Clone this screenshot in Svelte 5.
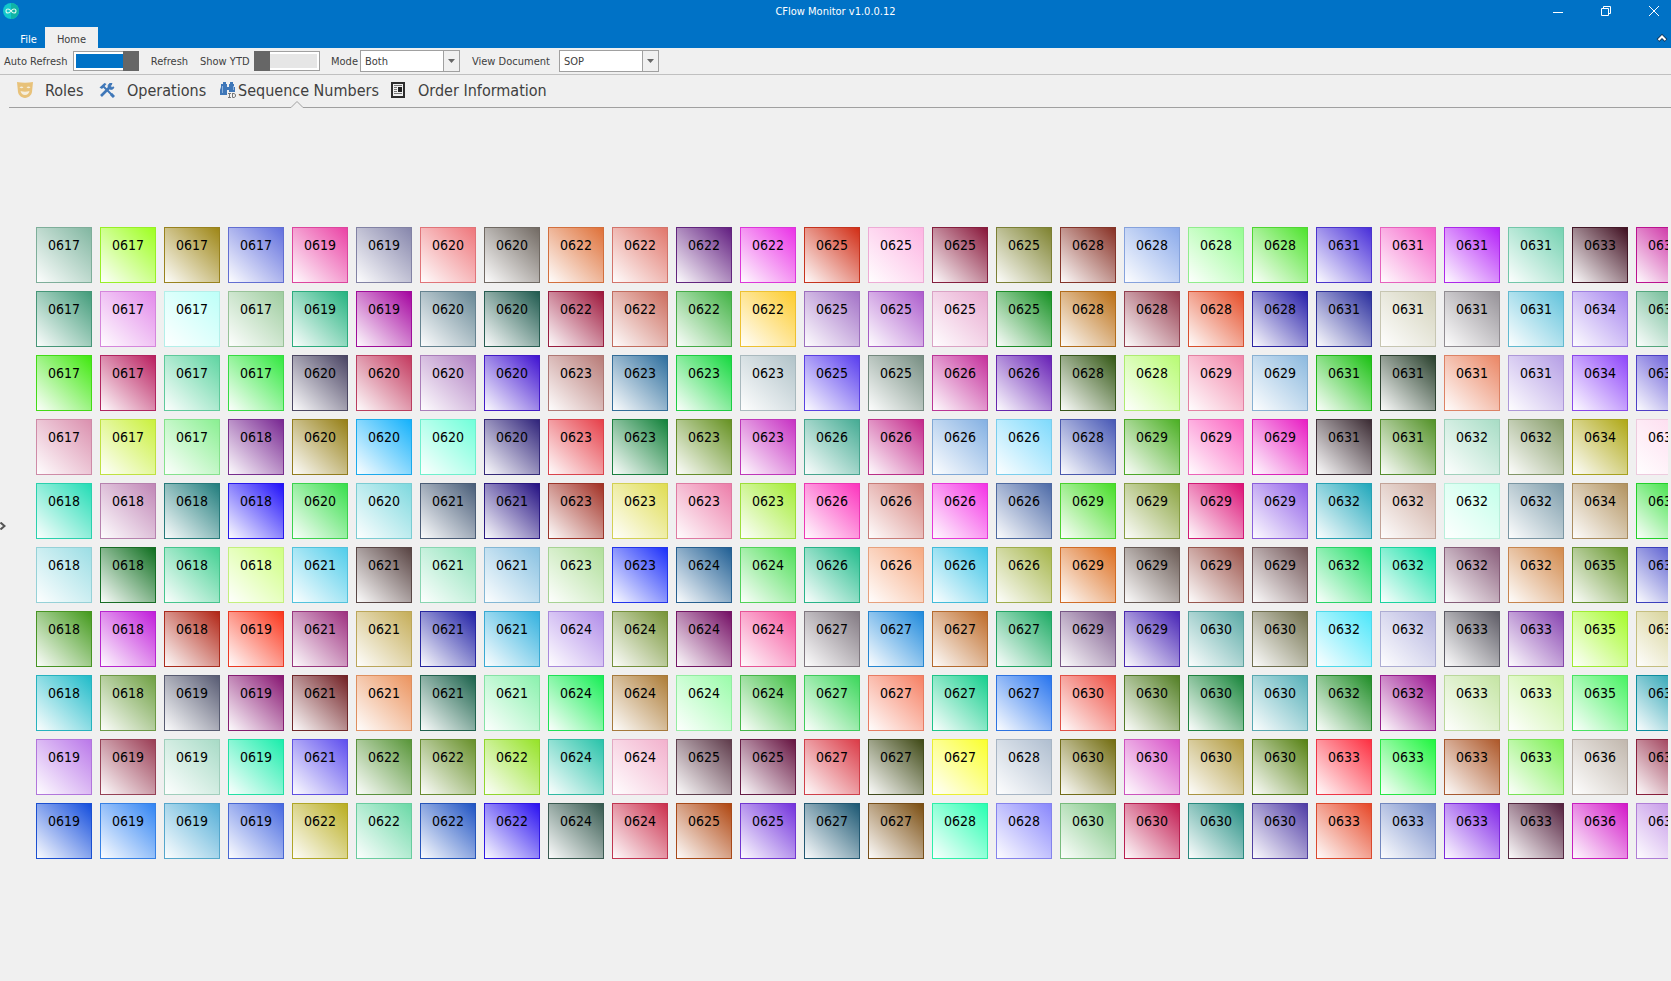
<script lang="ts">
  interface Tile {
    code: string;
    color: string;
  }

  const codes = [
    '0617 0617 0617 0617 0619 0619 0620 0620 0622 0622 0622 0622 0625 0625 0625 0625 0628 0628 0628 0628 0631 0631 0631 0631 0633 0636',
    '0617 0617 0617 0617 0619 0619 0620 0620 0622 0622 0622 0622 0625 0625 0625 0625 0628 0628 0628 0628 0631 0631 0631 0631 0634 0634',
    '0617 0617 0617 0617 0620 0620 0620 0620 0623 0623 0623 0623 0625 0625 0626 0626 0628 0628 0629 0629 0631 0631 0631 0631 0634 0634',
    '0617 0617 0617 0618 0620 0620 0620 0620 0623 0623 0623 0623 0626 0626 0626 0626 0628 0629 0629 0629 0631 0631 0632 0632 0634 0634',
    '0618 0618 0618 0618 0620 0620 0621 0621 0623 0623 0623 0623 0626 0626 0626 0626 0629 0629 0629 0629 0632 0632 0632 0632 0634 0635',
    '0618 0618 0618 0618 0621 0621 0621 0621 0623 0623 0624 0624 0626 0626 0626 0626 0629 0629 0629 0629 0632 0632 0632 0632 0635 0635',
    '0618 0618 0618 0619 0621 0621 0621 0621 0624 0624 0624 0624 0627 0627 0627 0627 0629 0629 0630 0630 0632 0632 0633 0633 0635 0635',
    '0618 0618 0619 0619 0621 0621 0621 0621 0624 0624 0624 0624 0627 0627 0627 0627 0630 0630 0630 0630 0632 0632 0633 0633 0635 0635',
    '0619 0619 0619 0619 0621 0622 0622 0622 0624 0624 0625 0625 0627 0627 0627 0628 0630 0630 0630 0630 0633 0633 0633 0633 0636 0636',
    '0619 0619 0619 0619 0622 0622 0622 0622 0624 0624 0625 0625 0627 0627 0628 0628 0630 0630 0630 0630 0633 0633 0633 0633 0636 0636'
  ];

  const colors = [
    '7fb59f 9cff1c 9c8412 5f6ddd ea3fa3 8484aa ee7479 6f6760 de6e35 e07469 5f1a7e ea2ee6 d02a12 fdb3e2 861236 7c802c 852c20 88a8ea 94fc90 4be32a 452bd8 f55fc8 b31df8 72d1b0 3c0a1c c30592',
    '3f9a78 e288ea bcfff8 9dcc9e 22b27e a3009e 648593 1c584c 9c1238 cb6a5c 3fb242 fdcb29 a16fc6 ac5acd e8a9d0 129020 ba6c10 94384b e54a24 231aa8 262a9c d2d1ba 949096 5fc2db a482ee 4fac7e',
    '3ce80a b81a5c 5cd4a0 2ee83c 464060 c2365c b07fc2 3c0ed0 b67874 2a6c9c 12d83c b0c2c8 563aee 748c80 c42c9a 641cb4 2f5410 b6fb70 f283a8 8ab8de 17c00f 243c28 ea8462 b49de5 8d42fa 4838d0',
    'da8ead c9f03a 88ef90 762390 947d12 10b0fb 6effd9 2c2078 e63c46 0f8038 64901f c62ec2 42aa92 c22488 82afe2 7cd9fc 4455b4 48ae20 fb60c0 e81ac2 382830 509024 a6dcc4 849a66 aea712 fdd6ec',
    '1fdcb4 bf84b5 1c7a7a 1c0cfa 34de48 7cd8de 455a76 200c80 a02c20 dfdc4f ec7ba8 a2ec32 fc30bc d47d78 f42fe5 4a68a6 44dd24 88a23c dc0c74 8e5ce8 1ca6ba cca99d c2ffe9 7a9aa9 b0905c 17dc1f',
    '9adde4 0a6c1b 3fcf90 ceff7f 4eccea 55403f 8ce2b9 86c0e1 aede98 182cfa 1c5c92 4cde56 1ebb8a f6a77e 3cc4e6 a4b447 dc6c1c 665650 9a5047 6f5254 1ede66 0fe0a5 875a78 d18748 639428 3338c5',
    '409818 c01ada b02212 fb3218 9c2e7e c4ac56 1c1ca4 30b0de b08be9 759334 720a62 f5509b 807780 1b88dc bd6824 19aa62 785488 4420b4 58a9a5 706f4b 48e6fa b4b4df 5a5862 8640b0 a4fb28 cec880',
    '1cbac8 6c9e3f 545870 861270 6f1c20 eb925c 165f48 88f1ac 12ee52 ac7a34 98fca8 40c044 38d658 f67d60 12ce8c 2472ee ee4c40 4f7c20 148438 54afb8 1c8c24 9a1290 c3e4a1 c4f298 44f260 0091a5',
    'b976e9 993a52 a6dac5 16edaa 5c4cee 569436 658e26 94e224 25c2a8 f2b0cc 5c3848 64103e da3844 3c4612 faff2a aebdcf 706a0c d74fc7 b0983a 548010 fd2c3e 1cf53c ac5526 7af050 c0b6ac 8a1434',
    '0f4adc 2e82f3 50acd6 4265e0 b8ac1c 68d8a5 1b50c2 260cf0 32564c ca2c4a ae430c 702edc 175470 784a0c 24ffb0 8785fc 78c47e c0144c 1e8c80 4c38a4 e64424 7189c8 7e20e8 501c3a d214c8 b87fe3'
  ];

  const tiles: Tile[] = codes.flatMap((row, r) => {
    const rowColors = colors[r].split(' ');
    return row.split(' ').map((code, c) => ({ code, color: `#${rowColors[c]}` }));
  });

  let autoRefresh = $state(true);
  let showYtd = $state(false);
  let mode = $state('Both');
  let viewDocument = $state('SOP');
</script>

<div class="window">
  <header>
    <div class="titlebar">
      <svg class="logo" viewBox="0 0 16 16" aria-hidden="true">
        <circle cx="8" cy="8" r="8" fill="#12c8cc" />
        <path d="M8 0a8 8 0 0 1 0 16z" fill="#0fb3a6" />
        <path
          d="M8 8C7 6.700 6 6 5 6a2 2 0 0 0 0 4c1 0 2-.7 3-2s2-2 3-2a2 2 0 0 1 0 4c-1 0-2-.7-3-2z"
          fill="none"
          stroke="#d8f8ee"
          stroke-width="1.100"
        />
      </svg>
      <h1>CFlow Monitor v1.0.0.12</h1>
      <div class="window-buttons">
        <button aria-label="Minimize">
          <svg viewBox="0 0 10 10"><path d="M0 6.500h10" /></svg>
        </button>
        <button aria-label="Restore">
          <svg viewBox="0 0 10 10"><path d="M.5 2.500h7v7h-7zM2.500 2.500v-2h7v7h-2" /></svg>
        </button>
        <button aria-label="Close">
          <svg viewBox="0 0 10 10"><path d="M0 0l10 10M10 0L0 10" /></svg>
        </button>
      </div>
    </div>
    <div class="ribbon-tabs">
      <button class="ribbon-tab">File</button>
      <button class="ribbon-tab active">Home</button>
      <button class="collapse" aria-label="Collapse ribbon">
        <svg viewBox="0 0 10 8">
          <path d="M1 6.500l4-4 4 4" stroke="#123c60" stroke-width="4" />
          <path d="M1.500 6l3.500-3.500L8.500 6" stroke="#fff" stroke-width="2" />
        </svg>
      </button>
    </div>
  </header>

  <div class="toolbar">
    <label for="auto-refresh">Auto Refresh</label>
    <input id="auto-refresh" class="toggle" type="checkbox" bind:checked={autoRefresh} />
    <button class="refresh">Refresh</button>
    <label for="show-ytd">Show YTD</label>
    <input id="show-ytd" class="toggle" type="checkbox" bind:checked={showYtd} />
    <label class="mode-label" for="mode">Mode</label>
    <div class="combo">
      <select id="mode" bind:value={mode}>
        <option>Both</option>
      </select>
      <svg viewBox="0 0 7 4" aria-hidden="true"><path d="M0 0h7L3.500 4z" /></svg>
    </div>
    <label class="view-label" for="view-document">View Document</label>
    <div class="combo">
      <select id="view-document" bind:value={viewDocument}>
        <option>SOP</option>
      </select>
      <svg viewBox="0 0 7 4" aria-hidden="true"><path d="M0 0h7L3.500 4z" /></svg>
    </div>
  </div>

  <nav>
    <a href="#roles" class="roles">
      <svg viewBox="0 0 16 16" aria-hidden="true">
        <path d="M0 0q8 1.500 16 0l-1 10c-.5 3-3 5.500-7 6-4-.5-6.500-3-7-6z" fill="#e8c27a" />
        <path d="M2.500 5.500q2-2 4 0-2 1.500-4 0zM9.500 5.500q2-2 4 0-2 1.500-4 0zM3.500 9q4.500 1.500 9 0-1 4-4.500 4T3.500 9z" fill="#f5eedd" />
      </svg>
      Roles
    </a>
    <a href="#operations" class="operations">
      <svg viewBox="0 0 16 16" aria-hidden="true" fill="none" stroke="#3f77b8">
        <path d="M4.500 4.500l9 9" stroke-width="2" />
        <path d="M.5 5.500L5.500 1l2 1-4.500 5z" fill="#3f77b8" stroke="none" />
        <path d="M2 14l8.500-8.500" stroke-width="2.600" />
        <path d="M13 1.500a3 3 0 1 0 2 3.500l-2.500.5-1-1.500z" fill="#3f77b8" stroke-width="1" />
        <path d="M12 12l3 3" stroke-width="3" />
      </svg>
      Operations
    </a>
    <a href="#sequence" class="sequence active" aria-current="page">
      <svg viewBox="0 0 16 16" aria-hidden="true">
        <path d="M3 0h3v2h1v3h2V2h1V0h3v2h1v3h1v5H9V8H7v5H0V8l1-3V2h2z" fill="#3f77b8" />
        <path d="M2.500 4v7M13.500 4v4" stroke="#8fb2dc" />
        <path d="M8 11.500h3M9.500 11.500v4M8 15.500h3M12.500 11v4.500h1.500l1.500-1v-2l-1.500-1h-1.500" fill="none" stroke="#777" />
      </svg>
      Sequence Numbers
      <svg class="notch" viewBox="0 0 12 7" aria-hidden="true">
        <path d="M0 6.500L6 .5l6 6V7H0z" fill="#f0f0f0" />
        <path d="M0 6.500L6 .5l6 6" fill="none" stroke="#a0a0a0" />
      </svg>
    </a>
    <a href="#orders" class="orders">
      <svg viewBox="0 0 14 16" aria-hidden="true">
        <path d="M1 1h12v14H1z" fill="#f0f0f0" stroke="#2d2d2d" stroke-width="2" />
        <path d="M3 3.500h8M3 5.500h3M3 7.500h3M3 9.500h3M3 11.500h8" stroke="#777" />
        <path d="M7 5h4v5H7z" fill="#222" />
      </svg>
      Order Information
    </a>
  </nav>

  <main>
    <button class="expander" aria-label="Expand panel">
      <svg viewBox="0 0 6 8"><path d="M.5 .5l4 3.500-4 3.500" /></svg>
    </button>
    <div class="board">
      {#each tiles as tile}
        <button class="tile" style="--tile: {tile.color}">{tile.code}</button>
      {/each}
    </div>
  </main>
</div>

<style>
  :global(body) {
    background: #f0f0f0;
  }

  .window {
    display: flex;
    flex-direction: column;
    min-height: 100vh;
    background: #f0f0f0;
    color: #404040;
    font-family: 'DejaVu Sans Condensed', 'Noto Sans', sans-serif;
    font-size: 11px;
  }

  button {
    margin: 0;
    padding: 0;
    border: 0;
    background: none;
    color: inherit;
    font: inherit;
  }

  svg {
    display: block;
    flex: none;
  }

  header {
    background: #0072c6;
    color: #fff;
  }

  .titlebar {
    display: grid;
    grid-template-columns: 1fr auto 1fr;
    align-items: center;
    height: 22px;
    padding: 0 3px;
  }

  .logo {
    width: 16px;
    height: 16px;
  }

  h1 {
    margin: 0;
    font-size: 11px;
    font-weight: normal;
  }

  .window-buttons {
    display: flex;
    justify-content: flex-end;
    gap: 38px;
    padding-right: 9px;
  }

  .window-buttons svg {
    width: 10px;
    height: 10px;
    fill: none;
    stroke: #fff;
    overflow: visible;
  }

  .ribbon-tabs {
    display: flex;
    align-items: stretch;
    height: 21px;
    padding: 5px 4px 0 12px;
  }

  .ribbon-tab {
    width: 33px;
    padding-top: 3px;
  }

  .ribbon-tab.active {
    width: 53px;
    background: #f0f0f0;
    color: #404040;
  }

  .collapse {
    margin-left: auto;
  }

  .collapse svg {
    width: 10px;
    height: 8px;
    fill: none;
    overflow: visible;
  }

  .toolbar {
    display: flex;
    align-items: center;
    height: 26px;
    padding-left: 4px;
    border-bottom: 1px solid #c0c0c0;
    white-space: nowrap;
  }

  .toolbar label {
    width: 69px;
  }

  .toolbar label[for='show-ytd'] {
    width: 54px;
  }

  .refresh {
    width: 61px;
  }

  .toolbar .mode-label {
    width: 29px;
    margin-left: 11px;
  }

  .toolbar .view-label {
    width: 87px;
    margin-left: 12px;
  }

  .toggle {
    display: flex;
    appearance: none;
    box-sizing: border-box;
    width: 66px;
    height: 20px;
    margin: 0;
    padding: 2px;
    border: 1px solid #a0a0a0;
    background: #e6e6e6 content-box;
    box-shadow: inset 0 0 0 2px #fff;
  }

  .toggle::before {
    content: '';
    width: 16px;
    margin: -3px;
    background: #666;
  }

  .toggle:checked {
    justify-content: flex-end;
    background-color: #0072c6;
  }

  .combo {
    display: grid;
    grid-template-columns: 1fr 17px;
    align-items: center;
    justify-items: center;
    width: 100px;
  }

  .combo select {
    grid-area: 1 / 1 / 2 / 3;
    appearance: none;
    box-sizing: border-box;
    width: 100%;
    height: 22px;
    padding: 0 4px;
    border: 1px solid #a0a0a0;
    border-radius: 0;
    background: linear-gradient(to left, #f0f0f0 15px, #a0a0a0 15px, #a0a0a0 16px, #fff 16px);
    color: inherit;
    font: inherit;
  }

  .combo svg {
    grid-area: 1 / 2;
    width: 7px;
    height: 4px;
    fill: #666;
    pointer-events: none;
  }

  nav {
    display: flex;
    height: 32px;
    margin-left: 9px;
    padding-left: 8px;
    border-bottom: 1px solid #a0a0a0;
    font-size: 16px;
    white-space: nowrap;
  }

  nav a {
    position: relative;
    display: flex;
    align-items: center;
    gap: 12px;
    box-sizing: border-box;
    height: 30px;
    color: inherit;
    text-decoration: none;
  }

  nav a > svg {
    width: 16px;
    height: 16px;
  }

  .roles {
    width: 82px;
  }

  .operations {
    width: 121px;
  }

  .sequence {
    width: 171px;
    gap: 2px;
  }

  .orders > svg {
    width: 14px;
    margin-right: 1px;
  }

  nav .notch {
    position: absolute;
    left: 71px;
    bottom: -3px;
    width: 12px;
    height: 7px;
  }

  main {
    display: flex;
    flex: 1;
    align-items: center;
    padding: 0 3px 3px 0;
  }

  .expander {
    flex: none;
    width: 36px;
    margin-top: -34px;
  }

  .expander svg {
    width: 6px;
    height: 8px;
    fill: none;
    stroke: #555;
    stroke-width: 2;
  }

  .board {
    display: grid;
    flex: 1;
    grid-template-columns: repeat(26, 56px);
    gap: 8px;
    min-width: 0;
    overflow: hidden;
  }

  .tile {
    box-sizing: border-box;
    height: 56px;
    padding-bottom: 21px;
    border: 1px solid color-mix(in srgb, var(--tile) 88%, #777);
    background: linear-gradient(45deg, #fff, var(--tile)) border-box;
    color: #000;
    font-size: 14px;
    line-height: 18px;
  }
</style>
